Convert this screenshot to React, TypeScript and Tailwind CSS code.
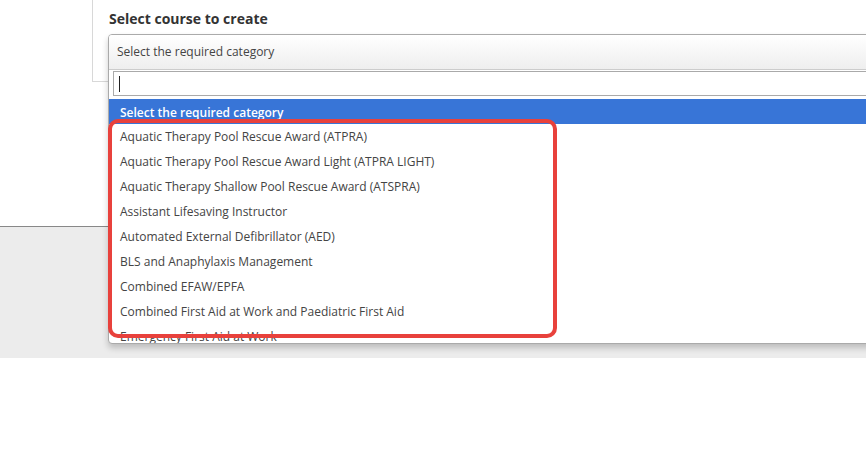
import React from 'react';

const options = [
  'Aquatic Therapy Pool Rescue Award (ATPRA)',
  'Aquatic Therapy Pool Rescue Award Light (ATPRA LIGHT)',
  'Aquatic Therapy Shallow Pool Rescue Award (ATSPRA)',
  'Assistant Lifesaving Instructor',
  'Automated External Defibrillator (AED)',
  'BLS and Anaphylaxis Management',
  'Combined EFAW/EPFA',
  'Combined First Aid at Work and Paediatric First Aid',
  'Emergency First Aid at Work',
];

export default function App() {
  return (
    <div className="relative w-[866px] h-[454px] overflow-hidden bg-white text-[#444]" style={{ fontFamily: '"Open Sans", "Liberation Sans", sans-serif' }}>
      {/* page background */}
      <div className="h-[226px] bg-white">
        <div className="ml-[92px] h-[82px] border-l border-b border-[#d8d8d8] pl-[16px] pt-[8px]">
          <h2 className="text-[14px] font-bold text-[#333]">Select course to create</h2>
        </div>
      </div>
      <div className="h-[132px] bg-[#ececec] border-t border-[#888]" />

      {/* dropdown */}
      <div className="absolute left-[108px] top-[34px] w-[770px] h-[310px] bg-white border border-[#aaa] rounded-sm shadow-[0_4px_6px_rgba(0,0,0,0.2)] overflow-hidden">
        <div className="h-[35px] flex items-center pl-[8px] text-[12px] text-[#444] bg-gradient-to-b from-white to-[#eee] border-b border-[#ccc]">
          Select the required category
        </div>
        <div className="px-[4px] pt-[1px] pb-[3px]">
          <div className="h-[25px] border border-[#aaa] flex items-center pl-[5px]">
            <div className="w-px h-[16px] bg-[#222]" />
          </div>
        </div>
        <div className="h-[25px] bg-[#3875d7] text-white text-[12px] font-semibold flex items-end pl-[11px] pb-[2px]">
          Select the required category
        </div>
        {options.map((o) => (
          <div key={o} className="h-[25px] flex items-center pl-[11px] text-[12px] text-[#444]">
            {o}
          </div>
        ))}
      </div>

      {/* highlight */}
      <div className="absolute left-[108px] top-[119px] w-[449px] h-[219px] border-[4px] border-[#e8413c] rounded-[10px]" />
    </div>
  );
}
